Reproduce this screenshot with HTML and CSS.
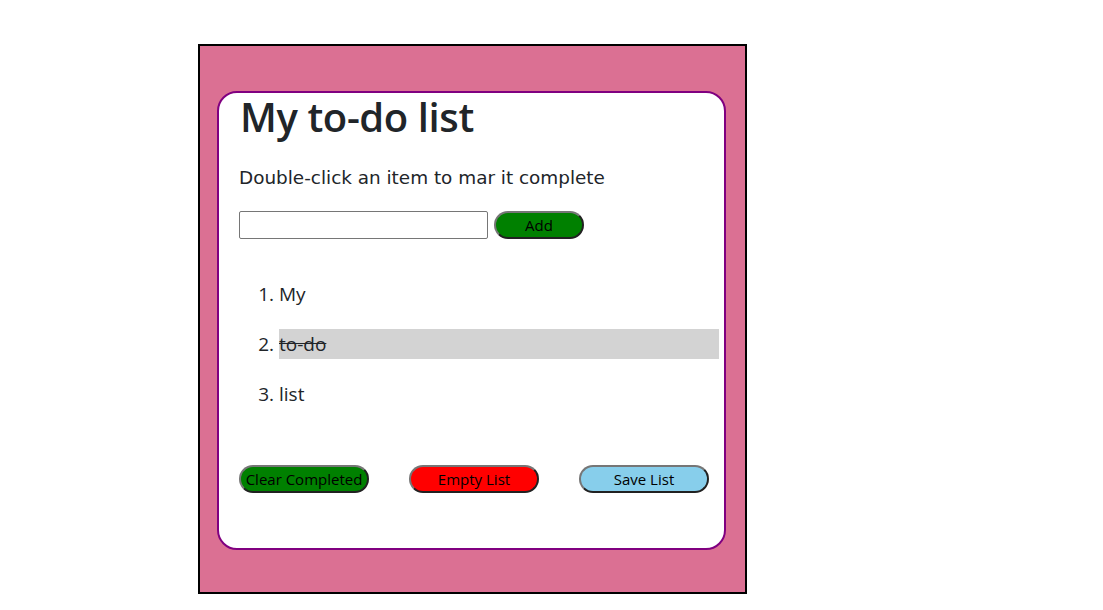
FILE: index.html
```html
<!DOCTYPE html>
<html lang="en">
<head>
<meta charset="utf-8">
<title>My to-do list</title>
<link rel="stylesheet" href="styles.css">
</head>
<body>
<div class="page">
  <div class="frame">
    <div class="card">
      <h1 class="title">My to-do list</h1>
      <p class="hint">Double-click an item to mar it complete</p>
      <div class="add-row">
        <input class="add-input" type="text">
        <button class="btn btn-green btn-add">Add</button>
      </div>
      <ol class="todo-list">
        <li class="todo-item">My</li>
        <li class="todo-item done">to-do</li>
        <li class="todo-item">list</li>
      </ol>
      <div class="actions">
        <button class="btn btn-green">Clear Completed</button>
        <button class="btn btn-red">Empty List</button>
        <button class="btn btn-blue">Save List</button>
      </div>
    </div>
  </div>
</div>
</body>
</html>
```

FILE: styles.css
```css
html, body {
  margin: 0;
  padding: 0;
  background: #fff;
}
.page {
  padding: 44px 0 0 198px;
}
.frame {
  width: 549px;
  height: 550px;
  box-sizing: border-box;
  border: 2px solid #000;
  background: #db7093;
  padding: 45px 19px 0 17px;
}
.card {
  height: 459px;
  box-sizing: border-box;
  border: 2px solid #800080;
  border-radius: 20px;
  background: #fff;
  padding: 0 5px 0 20px;
  color: #212529;
  font-family: "Open Sans", "Noto Sans", sans-serif;
}
.title {
  margin: 0 0 0 1px;
  font-size: 40px;
  line-height: 48px;
  font-weight: 600;
  letter-spacing: -0.4px;
}
.hint {
  margin: 23px 0 0 0;
  font-family: "DejaVu Sans", sans-serif;
  font-size: 18.4px;
  line-height: 27px;
}
.add-row {
  margin-top: 20px;
  display: flex;
  align-items: center;
  gap: 6px;
  height: 28px;
}
.add-input {
  width: 249px;
  height: 28px;
  box-sizing: border-box;
  border: 1px solid #767676;
  border-radius: 2px;
  padding: 1px 2px;
  margin: 0;
}
.btn {
  box-sizing: border-box;
  height: 28px;
  border: 2px outset #767676;
  border-radius: 14px;
  padding: 0;
  margin: 0;
  font-family: "Open Sans", "Noto Sans", sans-serif;
  font-size: 15px;
  color: #000;
  width: 130px;
}
.btn-add {
  width: 90px;
}
.btn-green { background: #008000; }
.btn-red { background: #ff0000; }
.btn-blue { background: #87ceeb; }
.todo-list {
  margin: 40px 0 0 0;
  padding-left: 40px;
  font-size: 19px;
  line-height: 30px;
}
.todo-item {
  margin-bottom: 20px;
}
.todo-item:last-child {
  margin-bottom: 0;
}
.done {
  background: #d3d3d3;
  text-decoration: line-through;
}
.actions {
  margin-top: 56px;
  display: flex;
  gap: 40px;
}
```
